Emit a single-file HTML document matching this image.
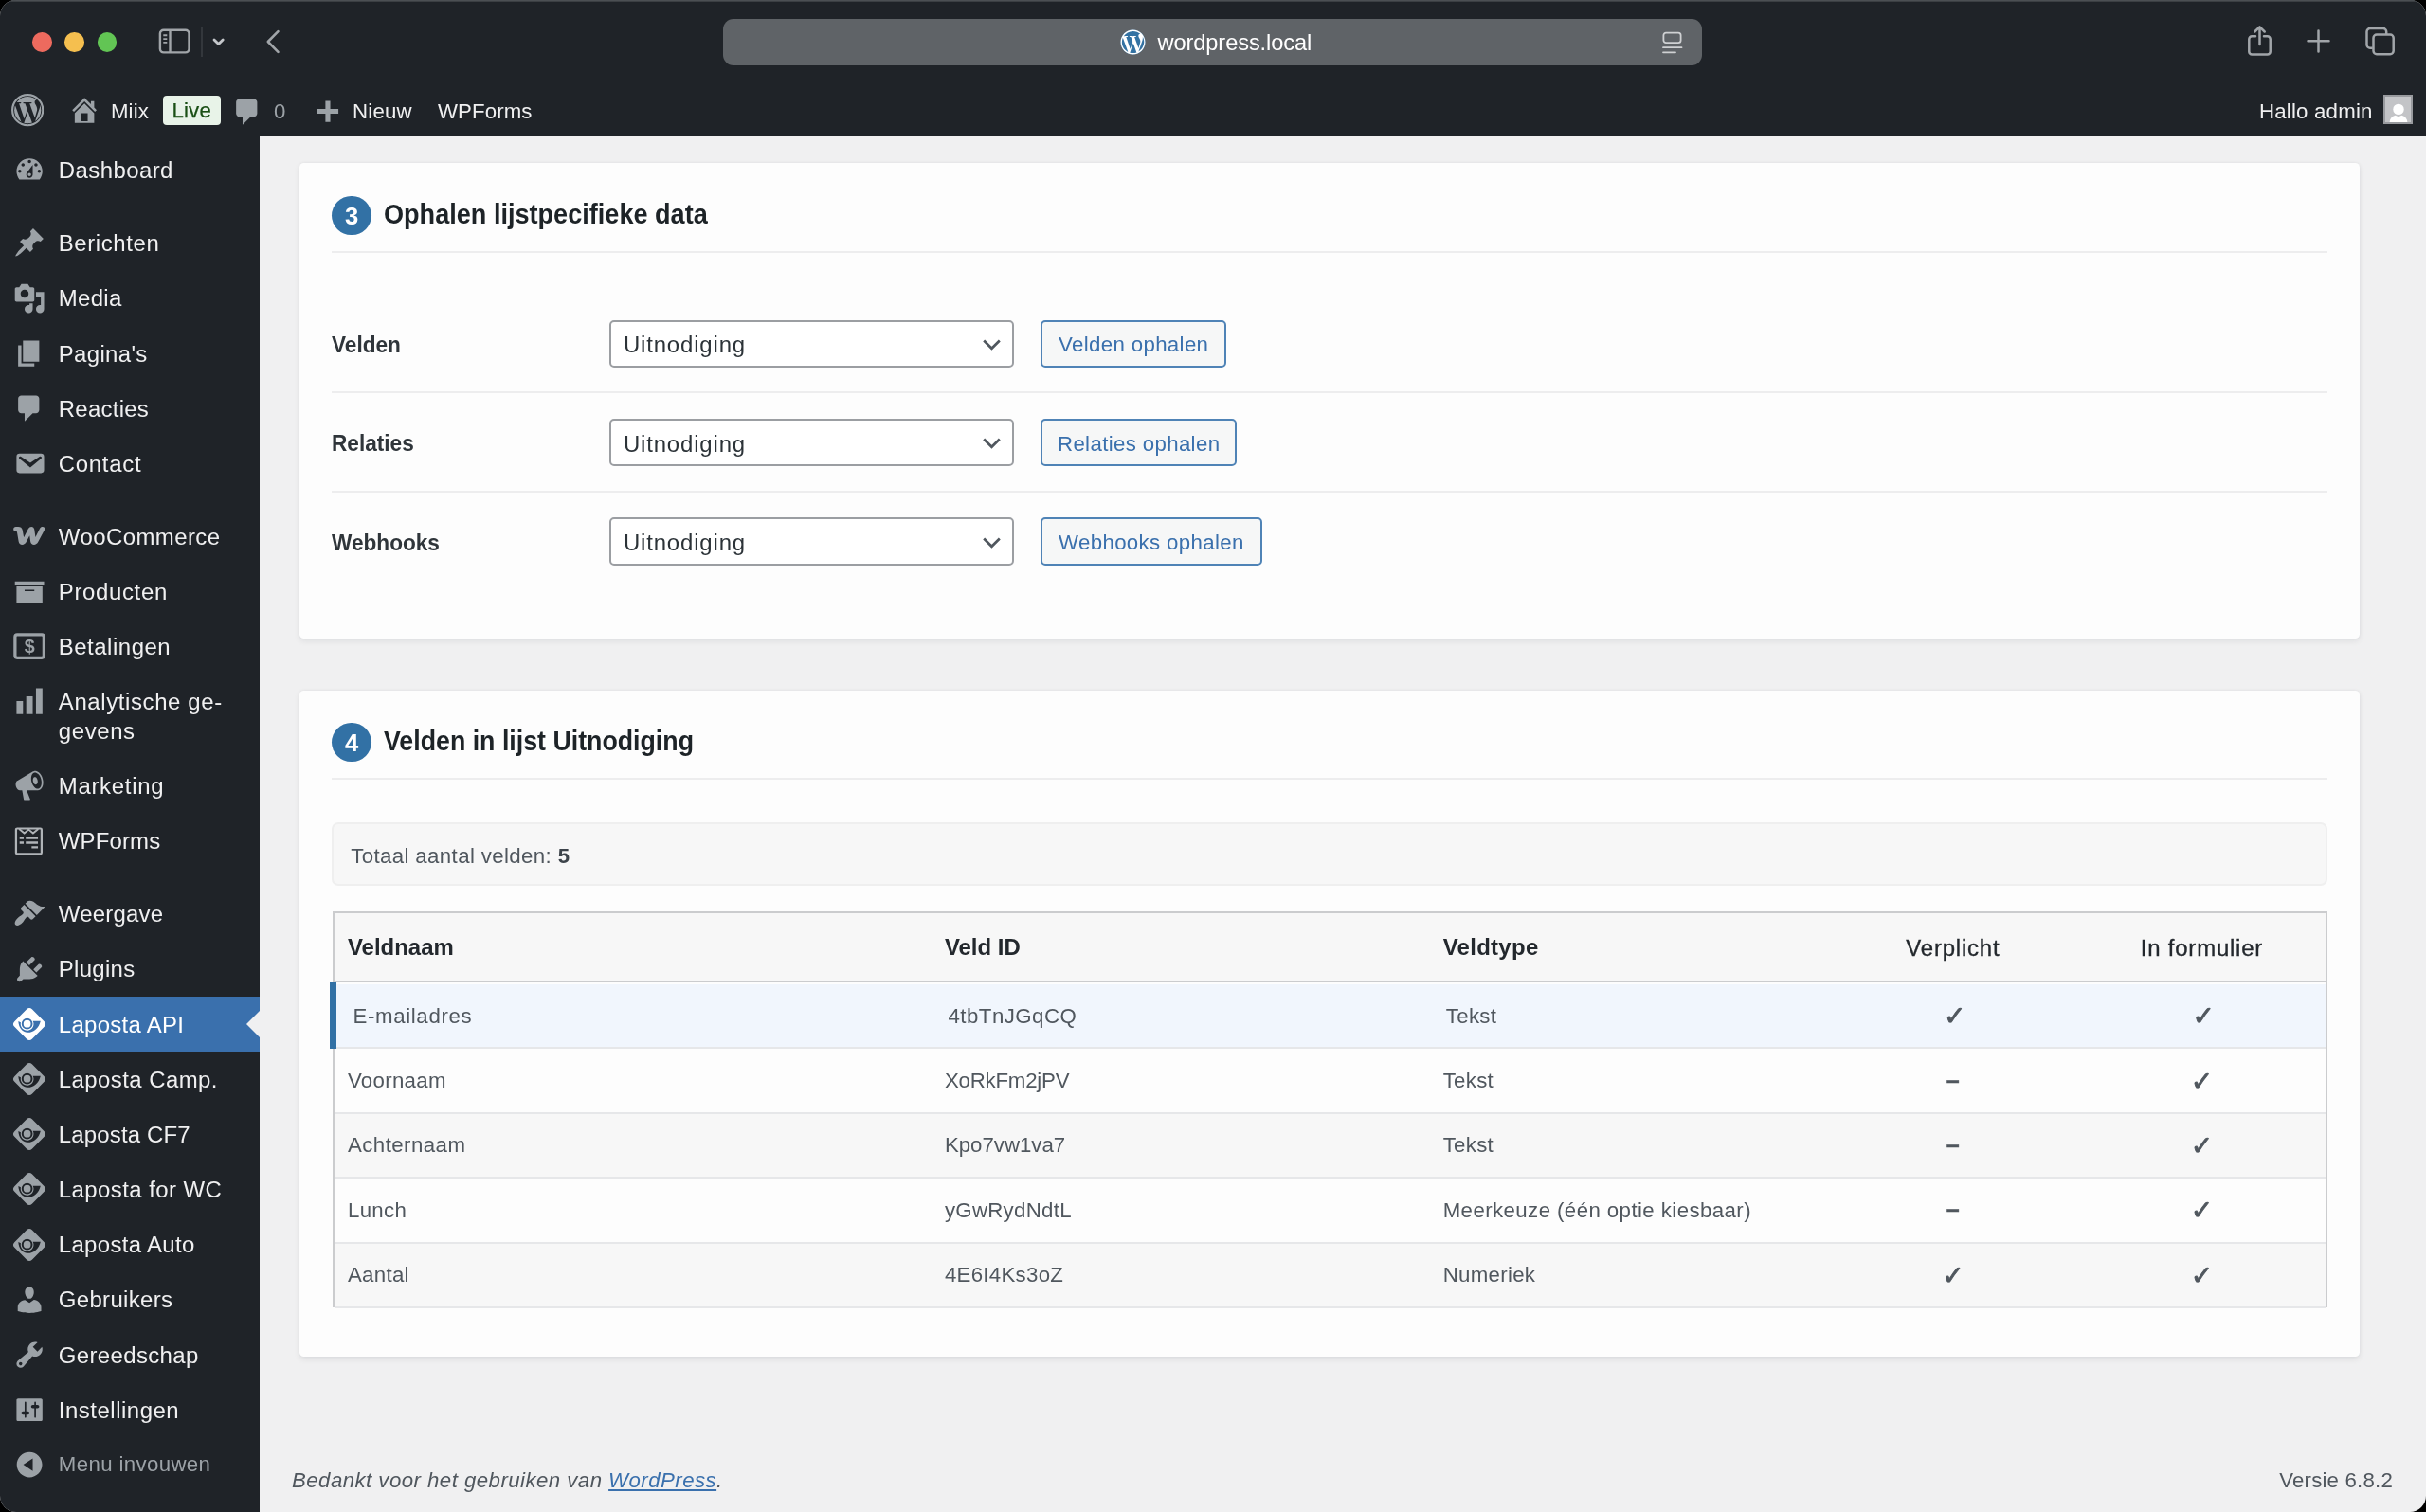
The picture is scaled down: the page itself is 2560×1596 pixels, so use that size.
<!DOCTYPE html>
<html lang="nl"><head><meta charset="utf-8"><title>Laposta API</title>
<style>
*{box-sizing:border-box;margin:0;padding:0}
html,body{width:2560px;height:1596px;background:#000;overflow:hidden}
body{font-family:"Liberation Sans",sans-serif;color:#3c434a;position:relative}
#win{position:absolute;left:0;top:0;width:2560px;height:1596px;border-radius:17px;overflow:hidden;background:#f0f0f1;will-change:transform;transform:translateZ(0)}
#chrome{position:absolute;left:0;top:0;width:2560px;height:89px;background:#1f2328}
#chrome .hl{position:absolute;left:0;top:0;width:100%;height:2px;background:linear-gradient(#53575b,#33373b)}
.tl{position:absolute;top:34px;width:20.6px;height:20.6px;border-radius:50%}
#url{position:absolute;left:762.5px;top:20px;width:1033.5px;height:48.5px;border-radius:11px;background:#5f6367}
#url .t{position:absolute;left:459px;top:1.2px;line-height:49px;font-size:23.6px;color:#fff;letter-spacing:-.08px;white-space:nowrap}
#url svg.w{position:absolute;left:419.5px;top:11px;width:27px;height:27px}
#adminbar{position:absolute;left:0;top:89px;width:2560px;height:54.75px;background:#1f2328;color:#f0f0f1;font-size:22.24px}
#adminbar .ab{position:absolute;top:1.8px;line-height:54.75px;white-space:nowrap}
#adminbar svg{position:absolute}
#live{position:absolute;left:171.7px;top:12px;width:61px;height:31px;border-radius:4px;background:#e8f3e8;color:#1a4f15;-webkit-text-stroke:.25px #1a4f15;text-align:center;line-height:31px;font-size:22.24px;letter-spacing:.2px}
#avatar{position:absolute;left:2515.3px;top:11.2px;width:31px;height:31px;background:#c3c4c7;border:2px solid #989a9e;overflow:hidden}
#sidebar{position:absolute;left:0;top:143.75px;width:273.5px;height:1452.25px;background:#1f2328}
#menu{position:absolute;left:0;top:6.65px;width:273.5px;list-style:none}
#menu li.sep{height:18.82px}
#menu li.mi{position:relative;height:58.16px;color:#f0f0f1;font-size:23.95px;line-height:31.1px}
#menu li.two{height:88.9px}
#menu li.mi .mn{position:absolute;left:61.8px;top:13.9px;white-space:nowrap;letter-spacing:.44px}
#menu li.mi svg.di{position:absolute;left:13.5px;top:12px;width:34.22px;height:34.22px}
#menu li.mi svg.lap{left:12.5px;top:11.25px;width:36px;height:36px}
#menu li.cur{background:#3a70ad;color:#fff}
#menu li.cur:after{content:"";position:absolute;right:0;top:15.1px;border:14px solid transparent;border-right-color:#f0f0f1;border-left-width:0}
#menu li.col{color:#9ca2a7;font-size:22.24px}
#menu li.col .mn{top:13.3px;letter-spacing:.37px}
.card{position:absolute;left:316.2px;width:2173.8px;background:#fdfdfd;border-radius:4.5px;box-shadow:0 0 3px rgba(20,30,45,.06),0 2.5px 6px rgba(20,30,45,.075)}
.num{position:absolute;left:34.3px;top:34.4px;width:41.4px;height:41.4px;border-radius:50%;background:#3271a5;color:#fff;font-weight:700;font-size:25.6px;line-height:42px;text-align:center}
.ttl{position:absolute;left:89.3px;top:33.6px;line-height:41.4px;font-size:28.9px;font-weight:700;color:#1d2327;white-space:nowrap;transform-origin:0 50%}
.hr{position:absolute;left:34.3px;right:34.3px;height:1.7px;background:#ededee}
.lbl{position:absolute;left:34.3px;font-weight:700;font-size:23.95px;color:#2f353a;line-height:50px;margin-top:1.3px;transform:scaleX(.945);transform-origin:0 50%}
.sel{position:absolute;left:327.2px;width:426.8px;height:50.3px;border:2px solid #9b9ea2;border-radius:5px;background:#fff;font-size:23.95px;color:#2c3338;line-height:46.3px;padding:1.6px 0 0 12.5px;letter-spacing:.85px}
.sel svg{position:absolute;right:12.5px;top:18.5px;width:19px;height:12px}
.btn{position:absolute;left:781.7px;height:50.3px;border:2px solid #4f83b6;border-radius:5px;background:#f6f7f7;color:#3a70ad;font-size:22.24px;line-height:46.3px;padding:1.6px 0 0;text-align:center;white-space:nowrap;letter-spacing:.36px}
#info{position:absolute;left:34.3px;right:34.3px;top:139.3px;height:67.3px;background:#f7f7f7;border:2px solid #efefef;border-radius:7px;font-size:22.24px;color:#50575e;line-height:63.3px;padding:2.1px 0 0 17.7px;letter-spacing:.38px}
#info b{color:#3c434a}
#tbl{position:absolute;left:34.7px;top:233px;width:2104.7px;height:418px;border:2px solid #cbccce;background:#fdfdfd}
.th{position:absolute;left:0;top:0;width:100%;height:73.7px;background:#f7f7f7;border-bottom:2px solid #cbccce;font-size:23.95px;color:#23282d;line-height:73.7px}
.th div,.tr div{position:absolute;top:0;white-space:nowrap}
.tr div{top:.6px}
.c1{left:14.1px}.c2{left:644px}.c3{left:1169.8px}
.c4{left:1576.7px;width:262.6px;text-align:center}.c5{left:1839.3px;width:262.6px;text-align:center}
.th .c1,.th .c2,.th .c3{font-weight:700;top:-.5px}
.th .c4,.th .c5{top:.2px;letter-spacing:.8px;-webkit-text-stroke:.35px #23282d}
.tr{position:absolute;left:0;width:100%;height:68.4px;border-bottom:2px solid #e6e7e9;font-size:22.24px;color:#50575e;line-height:66.7px;letter-spacing:.3px}
.tr.alt{background:#f7f7f7}
.tr.hl{background:#f1f6fd}
.tr.hl:before{content:"";position:absolute;left:-5px;top:-2.4px;width:7px;height:70.8px;background:#3271a5}
.tr.hl .c1{transform:translateX(5.5px)}
.tr.hl .c2{transform:translateX(3.6px)}
.tr.hl .c3{transform:translateX(3.2px)}
.tr.hl .c4,.tr.hl .c5{transform:translateX(1.8px)}
.ck{font-family:"DejaVu Sans",sans-serif;font-size:28px;font-weight:700;letter-spacing:0;-webkit-text-stroke:.9px #50575e;line-height:1;position:relative;top:2.5px}
.ds{font-weight:700;font-size:25px;-webkit-text-stroke:.5px #50575e;position:relative;top:-1.5px}
#foot{position:absolute;left:308px;top:1543.2px;font-size:22.24px;font-style:italic;color:#50575e;line-height:40px;white-space:nowrap;letter-spacing:.45px}
#foot u{color:#3a70ad}
#ver{position:absolute;right:35px;top:1543.2px;font-size:22.24px;color:#50575e;line-height:40px;white-space:nowrap;letter-spacing:.2px}
</style></head>
<body>
<div id="win">

<div id="chrome">
  <div class="hl"></div>
  <div class="tl" style="left:34.3px;background:#ed6a5e"></div>
  <div class="tl" style="left:68.4px;background:#f5bf4f"></div>
  <div class="tl" style="left:102.5px;background:#62c554"></div>
  <svg style="position:absolute;left:166px;top:29px" width="36" height="29" viewBox="0 0 36 29" fill="none" stroke="#a1a5a9" stroke-width="2.4"><rect x="2.9" y="2.7" width="30.6" height="23.7" rx="3.8"/><path d="M13.5 2.7v23.7"/><path d="M6.3 8.3h4M6.3 12.1h4M6.3 15.9h4" stroke-width="1.9"/></svg>
  <div style="position:absolute;left:212px;top:29px;width:2px;height:31px;background:#33373c"></div>
  <svg style="position:absolute;left:224.3px;top:39.8px" width="16" height="11" viewBox="0 0 16 11" fill="none" stroke="#c3c6ca" stroke-width="2.8" stroke-linecap="round" stroke-linejoin="round"><path d="M2 2l4.6 4.6 4.6-4.6"/></svg>
  <svg style="position:absolute;left:279px;top:29.6px" width="18" height="28" viewBox="0 0 18 28" fill="none" stroke="#a1a5a9" stroke-width="2.6" stroke-linecap="round" stroke-linejoin="round"><path d="M14.5 3.2L3.8 14l10.7 10.8"/></svg>
  <div id="url">
    <svg class="w" viewBox="0 0 20 20"><circle cx="10" cy="10" r="9.7" fill="#3372a3"/><path fill="#fff" d="M10 .4C4.7.4.4 4.7.400 10s4.3 9.6 9.6 9.6 9.6-4.3 9.6-9.6S15.3.4 10 .4zM1.4 10c0-1.2.300-2.4.700-3.5l4.1 11.2C3.4 16.3 1.4 13.4 1.4 10zm8.6 8.6c-.800 0-1.7-.100-2.4-.300l2.6-7.5 2.6 7.2c0 .1.1.100.1.200-.900.3-1.9.400-2.9.400zm1.2-12.6c.500 0 1-.100 1-.100.5-.100.4-.700 0-.700 0 0-1.4.100-2.3.100-.800 0-2.3-.100-2.3-.100-.500 0-.500.7-.100.7 0 0 .400.1.900.1l1.4 3.7-1.9 5.7L4.7 6c.500 0 1-.100 1-.100.5-.100.4-.700 0-.700 0 0-1.4.100-2.3.100h-.600C4.3 3 7 1.4 10 1.4c2.2 0 4.3.900 5.8 2.2h-.100c-.800 0-1.4.700-1.4 1.5 0 .7.4 1.3.800 2 .300.6.700 1.3.700 2.3 0 .700-.300 1.5-.600 2.7l-.800 2.7zm3.2 11.4l2.6-7.6c.500-1.2.700-2.2.700-3.1 0-.300 0-.600-.100-.900.7 1.2 1.1 2.6 1.1 4.1-.100 3.2-1.8 6-4.3 7.5z"/></svg>
    <div class="t">wordpress.local</div>
    <svg style="position:absolute;left:990px;top:13px" width="24" height="25" viewBox="0 0 24 25" fill="none" stroke="#cfd1d3" stroke-width="1.8" stroke-linecap="round"><rect x="2.4" y="1.6" width="18.2" height="10.6" rx="2.6"/><path d="M2 17.2h19.5M2 22.3h13"/></svg>
  </div>
  <svg style="position:absolute;left:2369px;top:25px" width="32" height="36" viewBox="0 0 32 36" fill="none" stroke="#a1a5a9" stroke-width="2.5" stroke-linecap="round" stroke-linejoin="round"><path d="M11 13.2H7.3a3 3 0 0 0-3 3v13.3a3 3 0 0 0 3 3h16.4a3 3 0 0 0 3-3V16.2a3 3 0 0 0-3-3H20"/><path d="M15.5 22V3.5M10.3 8.5l5.2-5.2 5.2 5.2"/></svg>
  <svg style="position:absolute;left:2433px;top:30px" width="27" height="27" viewBox="0 0 27 27" fill="none" stroke="#a1a5a9" stroke-width="2.5" stroke-linecap="round"><path d="M13.5 2.5v22M2.5 13.3h22"/></svg>
  <svg style="position:absolute;left:2494px;top:26px" width="36" height="35" viewBox="0 0 36 35" fill="none" stroke="#a1a5a9" stroke-width="2.5" stroke-linejoin="round"><path d="M9.7 24.7H7a3.5 3.5 0 0 1-3.5-3.5V7.5A3.5 3.5 0 0 1 7 4h13.7a3.5 3.5 0 0 1 3.5 3.5v2.8"/><rect x="10.5" y="10.5" width="21.2" height="20.7" rx="3.5"/></svg>
</div>

<div id="adminbar">
  <svg style="left:11.9px;top:10.4px;width:34.4px;height:34.4px" viewBox="0 0 20 20"><circle cx="10" cy="10" r="8.2" fill="#9ca2a7"/><path fill="#1f2328" d="M10 .4C4.7.4.4 4.7.400 10s4.3 9.6 9.6 9.6 9.6-4.3 9.6-9.6S15.3.4 10 .4zM1.4 10c0-1.2.300-2.4.700-3.5l4.1 11.2C3.4 16.3 1.4 13.4 1.4 10zm8.6 8.6c-.800 0-1.7-.100-2.4-.300l2.6-7.5 2.6 7.2c0 .1.1.100.1.200-.900.3-1.9.400-2.9.400zm1.2-12.6c.500 0 1-.100 1-.100.5-.100.4-.700 0-.700 0 0-1.4.100-2.3.100-.800 0-2.3-.100-2.3-.100-.500 0-.500.7-.100.7 0 0 .400.1.900.1l1.4 3.7-1.9 5.7L4.7 6c.500 0 1-.100 1-.100.5-.100.4-.700 0-.700 0 0-1.4.100-2.3.100h-.600C4.3 3 7 1.4 10 1.4c2.2 0 4.3.900 5.8 2.2h-.100c-.800 0-1.4.700-1.4 1.5 0 .7.4 1.3.800 2 .300.6.700 1.3.700 2.3 0 .700-.300 1.5-.600 2.7l-.800 2.7zm3.2 11.4l2.6-7.6c.500-1.2.700-2.2.700-3.1 0-.300 0-.600-.100-.900.7 1.2 1.1 2.6 1.1 4.1-.100 3.2-1.8 6-4.3 7.5z"/><circle cx="10" cy="10" r="9.35" fill="none" stroke="#9ca2a7" stroke-width="1.25"/></svg>
  <svg style="left:72.2px;top:10px;width:34.22px;height:34.22px" viewBox="0 0 20 20"><path fill="#9ca2a7" d="M16 8.5l1.53 1.53-1.06 1.06L10 4.62l-6.47 6.47-1.06-1.06L10 2.5l4 4v-2h2v4zm-6-2.46l6 5.99V18H4v-5.97zM12 17v-5H8v5h4z"/></svg>
  <div class="ab" style="left:117px;letter-spacing:.1px">Miix</div>
  <div id="live">Live</div>
  <svg style="left:243.6px;top:11.7px;width:34.22px;height:34.22px" viewBox="0 0 20 20"><path fill="#9ca2a7" d="M5 2h9c1.1 0 2 .9 2 2v7c0 1.1-.9 2-2 2h-2l-5 5v-5H5c-1.1 0-2-.9-2-2V4c0-1.1.9-2 2-2z"/></svg>
  <div class="ab" style="left:289px;color:#9ca2a7">0</div>
  <svg style="left:327.8px;top:13.9px;width:34.22px;height:34.22px" viewBox="0 0 20 20"><path fill="#9ca2a7" d="M17 7v3h-5v5H9v-5H4V7h5V2h3v5h5z"/></svg>
  <div class="ab" style="left:372px;letter-spacing:.2px">Nieuw</div>
  <div class="ab" style="left:462px;letter-spacing:.1px">WPForms</div>
  <div class="ab" style="left:2384px;letter-spacing:.2px">Hallo admin</div>
  <div id="avatar"><svg style="left:-2px;top:-2px" width="29" height="29" viewBox="0 0 29 29" fill="#fff"><circle cx="16" cy="15.4" r="5.7"/><path d="M6.6 29c.4-4.2 2.6-6.4 6-7.3l3.4 1.5 3.4-1.5c3.4.9 5.6 3.1 6 7.3z"/></svg></div>
</div>

<div id="sidebar">
<ul id="menu">
<li class="mi "><svg class="di" viewBox="0 0 20 20" fill="#9ca2a7"><path fill-rule="evenodd" d="M3.76 16h12.48c1.1-1.37 1.76-3.11 1.76-5 0-4.42-3.58-8-8-8s-8 3.58-8 8c0 1.89.66 3.63 1.76 5zM10 4c.55 0 1 .45 1 1s-.45 1-1 1-1-.45-1-1 .45-1 1-1zM6 6c.55 0 1 .45 1 1s-.45 1-1 1-1-.45-1-1 .45-1 1-1zm8 0c.55 0 1 .45 1 1s-.45 1-1 1-1-.45-1-1 .45-1 1-1zm-5.37 5.55L12 7v6c0 1.1-.9 2-2 2s-2-.9-2-2c0-.57.24-1.08.63-1.45zM4 10c.55 0 1 .45 1 1s-.45 1-1 1-1-.45-1-1 .45-1 1-1zm12 0c.55 0 1 .45 1 1s-.45 1-1 1-1-.45-1-1 .45-1 1-1zm-5 3c0-.55-.45-1-1-1s-1 .45-1 1 .45 1 1 1 1-.45 1-1z"/></svg><span class="mn">Dashboard</span></li>
<li class="sep"></li>
<li class="mi "><svg class="di" viewBox="0 0 20 20" fill="#9ca2a7"><path fill-rule="evenodd" d="M10.44 3.02l1.82-1.82 6.36 6.35-1.83 1.82c-1.05-.68-2.48-.57-3.41.36l-.75.75c-.92.93-1.04 2.35-.35 3.41l-1.83 1.82-2.41-2.41-2.8 2.79c-.42.42-3.38 2.71-3.8 2.29s1.86-3.39 2.28-3.81l2.79-2.79L4.1 9.36l1.83-1.82c1.05.69 2.48.57 3.4-.36l.75-.75c.93-.92 1.05-2.35.36-3.41z"/></svg><span class="mn" style="letter-spacing:0.6px">Berichten</span></li>
<li class="mi "><svg class="di" viewBox="0 0 20 20" fill="#9ca2a7"><path fill-rule="evenodd" d="M13 11V4c0-.55-.45-1-1-1h-1.67L9 1H5L3.67 3H2c-.55 0-1 .45-1 1v7c0 .55.45 1 1 1h10c.55 0 1-.45 1-1zM7 4.5c1.38 0 2.5 1.12 2.5 2.5S8.38 9.5 7 9.5 4.5 8.38 4.5 7 5.62 4.5 7 4.5zM14 6h5v10.5c0 1.38-1.12 2.5-2.5 2.5S14 17.88 14 16.5s1.12-2.5 2.5-2.5c.17 0 .34.02.5.05V9h-3V6zm-4 8.05V13h2v3.5c0 1.38-1.12 2.5-2.5 2.5S7 17.88 7 16.5 8.12 14 9.5 14c.17 0 .34.02.5.05z"/></svg><span class="mn" style="letter-spacing:0.3px">Media</span></li>
<li class="mi "><svg class="di" viewBox="0 0 20 20" fill="#9ca2a7"><path fill-rule="evenodd" d="M6 15V2h10v13H6zm-1 1h8v2H3V5h2v11z"/></svg><span class="mn" style="letter-spacing:0.35px">Pagina's</span></li>
<li class="mi "><svg class="di" viewBox="0 0 20 20" fill="#9ca2a7"><path fill-rule="evenodd" d="M5 2h9c1.1 0 2 .9 2 2v7c0 1.1-.9 2-2 2h-2l-5 5v-5H5c-1.1 0-2-.9-2-2V4c0-1.1.9-2 2-2z"/></svg><span class="mn" style="letter-spacing:0.27px">Reacties</span></li>
<li class="mi "><svg class="di" viewBox="0 0 20 20" fill="#9ca2a7"><path fill-rule="evenodd" d="M3.87 4h13.25C18.37 4 19 4.59 19 5.79v8.42c0 1.19-.63 1.79-1.88 1.79H3.87c-1.25 0-1.88-.6-1.88-1.79V5.79c0-1.2.63-1.79 1.88-1.79zm6.62 8.6l6.74-5.53c.24-.2.43-.66.13-1.07-.29-.41-.82-.42-1.17-.17l-5.7 3.86L4.8 5.83c-.35-.25-.88-.24-1.17.17-.3.41-.11.87.13 1.07z"/></svg><span class="mn" style="letter-spacing:0.71px">Contact</span></li>
<li class="sep"></li>
<li class="mi "><svg class="di" style="margin-top:-1.5px" viewBox="0 0 20 20" fill="#9ca2a7"><path d="M1.6 5.2c-.9 0-1.5.700-1.5 1.5 0 .8.6 1.4 1.4 1.4.500 0 .800.2.900.9l.900 5.3c.200 1.3 1 2 2.2 2 1.1 0 1.9-.500 2.6-1.8l2-3.8.500 3.6c.200 1.3 1 2 2.2 2 1.1 0 1.9-.500 2.6-1.8l3.9-7.3c.500-1-.100-2-1.3-2-.700 0-1.2.300-1.6 1.1l-2.7 5.4-.700-4.8c-.200-1.1-.800-1.7-1.8-1.7-.800 0-1.4.400-1.9 1.3L6.5 11.9 5.7 7.3C5.4 5.8 4.5 5.2 3 5.2z"/></svg><span class="mn">WooCommerce</span></li>
<li class="mi "><svg class="di" viewBox="0 0 20 20" fill="#9ca2a7"><path fill-rule="evenodd" d="M19 4v2H1V4h18zM2 7h16v10H2V7zm11 3V9H7v1h6z"/></svg><span class="mn" style="letter-spacing:0.66px">Producten</span></li>
<li class="mi "><svg class="di" viewBox="0 0 20 20"><rect x="1.1" y="2.9" width="17.8" height="14.2" rx="1.3" fill="none" stroke="#9ca2a7" stroke-width="1.9"/><text x="10" y="14.3" text-anchor="middle" font-family="Liberation Sans,sans-serif" font-weight="700" font-size="11.5" fill="#9ca2a7">$</text></svg><span class="mn" style="letter-spacing:0.52px">Betalingen</span></li>
<li class="mi two"><svg class="di" viewBox="0 0 20 20" fill="#9ca2a7"><path fill-rule="evenodd" d="M18 18V2h-4v16h4zm-6 0V7H8v11h4zm-6 0v-8H2v8h4z"/></svg><span class="mn" style="letter-spacing:0.62px">Analytische ge-<br>gevens</span></li>
<li class="mi "><svg class="di" viewBox="0 0 20 20" fill="#9ca2a7"><path fill-rule="evenodd" d="M18.15 5.94c.46 1.62.38 3.22-.02 4.48-.42 1.28-1.26 2.18-2.3 2.48-.16.06-.26.06-.4.06-.06.02-.12.02-.18.02-.06.02-.14.02-.22.02h-6.8l2.22 5.5c.02.14-.06.26-.14.34-.08.1-.24.16-.34.16H6.95c-.1 0-.26-.06-.34-.16-.08-.08-.16-.2-.14-.34l-1-5.5H4.25l-.02-.02c-.5.06-1.08-.18-1.54-.62s-.88-1.08-1.06-1.88c-.24-.8-.2-1.56-.02-2.2.18-.62.58-1.08 1.06-1.3l.02-.02 9-5.4c.1-.06.18-.1.24-.16.06-.04.14-.08.24-.12.16-.08.28-.12.5-.18 1.04-.3 2.24.1 3.22.98s1.84 2.24 2.26 3.86zm-2.58 5.98h-.02c.4-.1.74-.34 1.04-.7.58-.7.86-1.76.86-3.04 0-.64-.1-1.3-.28-1.98-.34-1.36-1.02-2.5-1.78-3.24s-1.68-1.1-2.46-.88c-.82.22-1.4.96-1.7 2-.32 1.04-.28 2.36.06 3.72.38 1.36 1 2.5 1.8 3.24.78.74 1.62 1.1 2.48.88zm-2.54-7.08c.22-.04.42-.02.62.04.38.16.76.48 1.02 1s.42 1.2.42 1.78c0 .3-.04.56-.12.8-.18.48-.44.84-.86.94-.34.1-.8-.06-1.14-.4s-.64-.86-.78-1.5c-.18-.62-.12-1.24.02-1.72s.48-.84.82-.94z"/></svg><span class="mn" style="letter-spacing:0.7px">Marketing</span></li>
<li class="mi "><svg class="di" style="margin:.9px 0 0 -.8px" viewBox="0 0 20 20" fill="none" stroke="#b0b4b8"><rect x="2.3" y="2.05" width="15.75" height="15.65" rx=".7" stroke-width="1.3"/><path d="M4.2 2.3l3.2 2.7 2.7-2.3 2.7 2.3 3.2-2.7" stroke-width="1.1"/><path d="M4.5 7.95h2.5M8.3 7.95h7.5M4.5 10.8h2.5M8.3 10.8h7.5M11.9 13.7h3.9" stroke-width="1.35"/></svg><span class="mn" style="letter-spacing:0.17px">WPForms</span></li>
<li class="sep"></li>
<li class="mi "><svg class="di" viewBox="0 0 20 20" fill="#9ca2a7"><path fill-rule="evenodd" d="M14.48 11.06L7.41 3.99l1.5-1.5c.5-.56 2.3-.47 3.51.32 1.21.8 1.43 1.28 2.91 2.1 1.18.64 2.45 1.26 4.45.85zm-.71.71L6.7 4.7 4.93 6.47c-.39.39-.39 1.02 0 1.41l1.06 1.06c.39.39.39 1.03 0 1.42-.6.6-1.43 1.11-2.21 1.69-.35.26-.7.53-1.01.84C1.43 14.23.4 16.08 1.4 17.07c.99 1 2.84-.03 4.18-1.36.31-.31.58-.66.85-1.02.57-.78 1.08-1.61 1.69-2.21.39-.39 1.02-.39 1.41 0l1.06 1.06c.39.39 1.02.39 1.41 0z"/></svg><span class="mn" style="letter-spacing:0.24px">Weergave</span></li>
<li class="mi "><svg class="di" viewBox="0 0 20 20" fill="#9ca2a7"><path fill-rule="evenodd" d="M13.11 4.36L9.87 7.6 8 5.73l3.24-3.24c.35-.34 1.05-.2 1.56.32.52.51.66 1.21.31 1.55zm-8 1.77l.91-1.12 9.01 9.01-1.19.84c-.71.71-2.63 1.16-3.82 1.16H6.14L4.9 17.26c-.59.59-1.54.59-2.12 0-.59-.58-.59-1.53 0-2.12l1.24-1.24v-3.88c0-1.13.4-3.19 1.09-3.89zm7.26 3.97l3.24-3.24c.34-.35 1.04-.21 1.55.31.52.51.66 1.21.31 1.55l-3.24 3.25z"/></svg><span class="mn" style="letter-spacing:0.31px">Plugins</span></li>
<li class="mi cur"><svg class="di lap" viewBox="0 0 36 36"><rect x="4.9" y="4.9" width="26.2" height="26.2" rx="4" transform="rotate(45 18 18)" fill="#fff"/><path d="M6.35 15.1C6.6 21.5 10.5 26.8 16.2 26.8c6.6 0 12-5 13.6-12.15h-8.15A6.88 6.88 0 1 1 8.9 16.3z" fill="#3a70ad"/><circle cx="15.64" cy="17.66" r="4.86" fill="none" stroke="#3a70ad" stroke-width="1.98"/></svg><span class="mn" style="letter-spacing:0.31px">Laposta API</span></li>
<li class="mi "><svg class="di lap" viewBox="0 0 36 36"><rect x="4.9" y="4.9" width="26.2" height="26.2" rx="4" transform="rotate(45 18 18)" fill="#9ca2a7"/><path d="M6.35 15.1C6.6 21.5 10.5 26.8 16.2 26.8c6.6 0 12-5 13.6-12.15h-8.15A6.88 6.88 0 1 1 8.9 16.3z" fill="#1f2328"/><circle cx="15.64" cy="17.66" r="4.86" fill="none" stroke="#1f2328" stroke-width="1.98"/></svg><span class="mn">Laposta Camp.</span></li>
<li class="mi "><svg class="di lap" viewBox="0 0 36 36"><rect x="4.9" y="4.9" width="26.2" height="26.2" rx="4" transform="rotate(45 18 18)" fill="#9ca2a7"/><path d="M6.35 15.1C6.6 21.5 10.5 26.8 16.2 26.8c6.6 0 12-5 13.6-12.15h-8.15A6.88 6.88 0 1 1 8.9 16.3z" fill="#1f2328"/><circle cx="15.64" cy="17.66" r="4.86" fill="none" stroke="#1f2328" stroke-width="1.98"/></svg><span class="mn" style="letter-spacing:0.18px">Laposta CF7</span></li>
<li class="mi "><svg class="di lap" viewBox="0 0 36 36"><rect x="4.9" y="4.9" width="26.2" height="26.2" rx="4" transform="rotate(45 18 18)" fill="#9ca2a7"/><path d="M6.35 15.1C6.6 21.5 10.5 26.8 16.2 26.8c6.6 0 12-5 13.6-12.15h-8.15A6.88 6.88 0 1 1 8.9 16.3z" fill="#1f2328"/><circle cx="15.64" cy="17.66" r="4.86" fill="none" stroke="#1f2328" stroke-width="1.98"/></svg><span class="mn">Laposta for WC</span></li>
<li class="mi "><svg class="di lap" viewBox="0 0 36 36"><rect x="4.9" y="4.9" width="26.2" height="26.2" rx="4" transform="rotate(45 18 18)" fill="#9ca2a7"/><path d="M6.35 15.1C6.6 21.5 10.5 26.8 16.2 26.8c6.6 0 12-5 13.6-12.15h-8.15A6.88 6.88 0 1 1 8.9 16.3z" fill="#1f2328"/><circle cx="15.64" cy="17.66" r="4.86" fill="none" stroke="#1f2328" stroke-width="1.98"/></svg><span class="mn" style="letter-spacing:0.34px">Laposta Auto</span></li>
<li class="mi "><svg class="di" viewBox="0 0 20 20" fill="#9ca2a7"><path fill-rule="evenodd" d="M10 9.25c-2.27 0-2.73-3.44-2.73-3.44C7 4.02 7.82 2 9.97 2c2.16 0 2.98 2.02 2.71 3.81 0 0-.41 3.44-2.68 3.44zm0 2.57L12.72 10c2.39 0 4.52 2.33 4.52 4.53v2.49s-3.65 1.13-7.24 1.13c-3.65 0-7.24-1.13-7.24-1.13v-2.49c0-2.25 1.94-4.48 4.47-4.48z"/></svg><span class="mn" style="letter-spacing:0.35px">Gebruikers</span></li>
<li class="mi "><svg class="di" viewBox="0 0 20 20" fill="#9ca2a7"><path fill-rule="evenodd" d="M16.68 9.77c-1.34 1.34-3.3 1.67-4.95.99l-5.41 6.52c-.99.99-2.59.99-3.58 0s-.99-2.59 0-3.57l6.52-5.42c-.68-1.65-.35-3.61.99-4.95 1.28-1.28 3.12-1.62 4.72-1.06l-2.89 2.89 2.82 2.82 2.86-2.87c.53 1.58.18 3.39-1.08 4.65zM3.81 16.21c.4.39 1.04.39 1.43 0 .4-.4.4-1.04 0-1.43-.39-.4-1.03-.4-1.43 0-.39.39-.39 1.03 0 1.43z"/></svg><span class="mn" style="letter-spacing:0.38px">Gereedschap</span></li>
<li class="mi "><svg class="di" viewBox="0 0 20 20" fill="#9ca2a7"><path fill-rule="evenodd" d="M18 16V4c0-.55-.45-1-1-1H3c-.55 0-1 .45-1 1v12c0 .55.45 1 1 1h14c.55 0 1-.45 1-1zM8 11h1c.55 0 1 .45 1 1s-.45 1-1 1H8v1.5c0 .28-.22.5-.5.5s-.5-.22-.5-.5V13H6c-.55 0-1-.45-1-1s.45-1 1-1h1V5.5c0-.28.22-.5.5-.5s.5.22.5.5V11zm5-2h-1c-.55 0-1-.45-1-1s.45-1 1-1h1V5.5c0-.28.22-.5.5-.5s.5.22.5.5V7h1c.55 0 1 .45 1 1s-.45 1-1 1h-1v5.5c0 .28-.22.5-.5.5s-.5-.22-.5-.5V9z"/></svg><span class="mn" style="letter-spacing:0.52px">Instellingen</span></li>
<li class="mi col"><svg class="di" viewBox="0 0 20 20" fill="#9ca2a7"><path fill-rule="evenodd" d="M10 2.16c4.33 0 7.84 3.51 7.84 7.84s-3.51 7.84-7.84 7.84S2.16 14.33 2.16 10 5.67 2.16 10 2.16zm2 11.72V6.12L6.18 9.97z"/></svg><span class="mn">Menu invouwen</span></li>
</ul>
</div>

<div class="card" style="top:172.3px;height:501.9px">
  <div class="num">3</div>
  <div class="ttl" style="transform:scaleX(.9377)">Ophalen lijstpecifieke data</div>
  <div class="hr" style="top:93px"></div>
  <div class="lbl" style="top:165.3px">Velden</div>
  <div class="sel" style="top:165.3px">Uitnodiging<svg viewBox="0 0 19 12" fill="none" stroke="#50575e" stroke-width="2.7"><path d="M1.2 1.5l8.3 8.3 8.3-8.3"/></svg></div>
  <div class="btn" style="top:165.3px;width:196.6px">Velden ophalen</div>
  <div class="hr" style="top:241.2px"></div>
  <div class="lbl" style="top:269.7px">Relaties</div>
  <div class="sel" style="top:269.7px">Uitnodiging<svg viewBox="0 0 19 12" fill="none" stroke="#50575e" stroke-width="2.7"><path d="M1.2 1.5l8.3 8.3 8.3-8.3"/></svg></div>
  <div class="btn" style="top:269.7px;width:207.6px">Relaties ophalen</div>
  <div class="hr" style="top:345.6px"></div>
  <div class="lbl" style="top:374.1px">Webhooks</div>
  <div class="sel" style="top:374.1px">Uitnodiging<svg viewBox="0 0 19 12" fill="none" stroke="#50575e" stroke-width="2.7"><path d="M1.2 1.5l8.3 8.3 8.3-8.3"/></svg></div>
  <div class="btn" style="top:374.1px;width:234px">Webhooks ophalen</div>
</div>

<div class="card" style="top:728.7px;height:703px">
  <div class="num">4</div>
  <div class="ttl" style="transform:scaleX(.926)">Velden in lijst Uitnodiging</div>
  <div class="hr" style="top:92.4px"></div>
  <div id="info">Totaal aantal velden: <b>5</b></div>
  <div id="tbl">
    <div class="th"><div class="c1">Veldnaam</div><div class="c2">Veld ID</div><div class="c3" style="letter-spacing:.3px">Veldtype</div><div class="c4">Verplicht</div><div class="c5">In formulier</div></div>
    <div id="rows">
<div class="tr hl" style="top:75.4px"><div class="c1" style="letter-spacing:0.65px">E-mailadres</div><div class="c2" style="letter-spacing:0.48px">4tbTnJGqCQ</div><div class="c3">Tekst</div><div class="c4"><span class="ck">✓</span></div><div class="c5"><span class="ck">✓</span></div></div>
<div class="tr " style="top:143.8px"><div class="c1">Voornaam</div><div class="c2" style="letter-spacing:-0.2px">XoRkFm2jPV</div><div class="c3">Tekst</div><div class="c4"><span class="ds">–</span></div><div class="c5"><span class="ck">✓</span></div></div>
<div class="tr alt" style="top:212.2px"><div class="c1" style="letter-spacing:0.45px">Achternaam</div><div class="c2" style="letter-spacing:0px">Kpo7vw1va7</div><div class="c3">Tekst</div><div class="c4"><span class="ds">–</span></div><div class="c5"><span class="ck">✓</span></div></div>
<div class="tr " style="top:280.6px"><div class="c1">Lunch</div><div class="c2">yGwRydNdtL</div><div class="c3" style="letter-spacing:0.42px">Meerkeuze (één optie kiesbaar)</div><div class="c4"><span class="ds">–</span></div><div class="c5"><span class="ck">✓</span></div></div>
<div class="tr alt" style="top:349px"><div class="c1">Aantal</div><div class="c2">4E6I4Ks3oZ</div><div class="c3">Numeriek</div><div class="c4"><span class="ck">✓</span></div><div class="c5"><span class="ck">✓</span></div></div>
    </div>
  </div>
</div>

<div id="foot">Bedankt voor het gebruiken van <u>WordPress</u>.</div>
<div id="ver">Versie 6.8.2</div>

</div>
</body></html>
